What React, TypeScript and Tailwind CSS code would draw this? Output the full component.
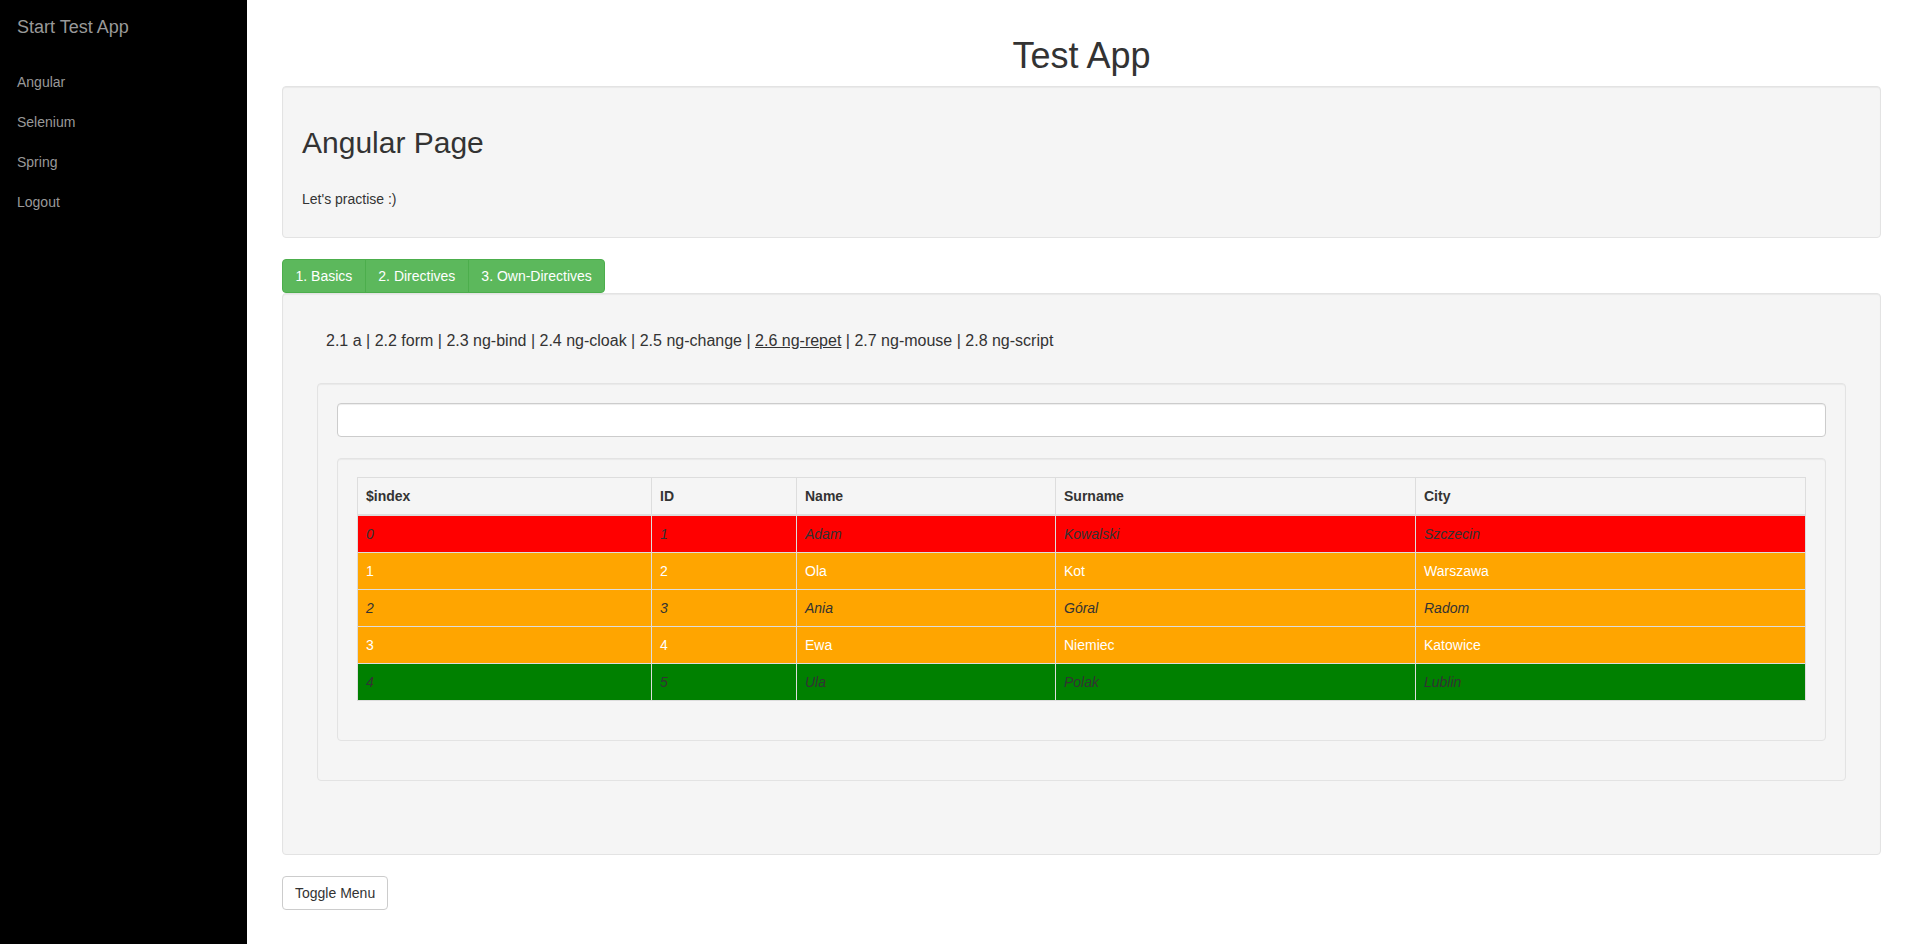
import React from 'react';

const people = [
  { id: 1, name: 'Adam', surname: 'Kowalski', city: 'Szczecin', bg: 'bg-[#ff0000]', text: 'italic text-[#333]' },
  { id: 2, name: 'Ola', surname: 'Kot', city: 'Warszawa', bg: 'bg-[#ffa500]', text: 'text-white' },
  { id: 3, name: 'Ania', surname: 'Góral', city: 'Radom', bg: 'bg-[#ffa500]', text: 'italic text-[#333]' },
  { id: 4, name: 'Ewa', surname: 'Niemiec', city: 'Katowice', bg: 'bg-[#ffa500]', text: 'text-white' },
  { id: 5, name: 'Ula', surname: 'Polak', city: 'Lublin', bg: 'bg-[#008000]', text: 'italic text-[#333]' },
];

const menu = ['Angular', 'Selenium', 'Spring', 'Logout'];

const links = ['2.1 a', '2.2 form', '2.3 ng-bind', '2.4 ng-cloak', '2.5 ng-change', '2.6 ng-repet', '2.7 ng-mouse', '2.8 ng-script'];

const Sidebar: React.FC = () => (
  <aside className="w-[247px] shrink-0 bg-black">
    <div className="h-[62px] px-[17px] text-[18px] leading-[54px] text-[#999]">Start Test App</div>
    <ul>
      {menu.map((item) => (
        <li key={item} className="h-[40px] px-[17px] text-[14px] leading-[40px] text-[#999]">
          {item}
        </li>
      ))}
    </ul>
  </aside>
);

const cell = 'border border-[#ddd] px-[8px] py-[8px] text-left leading-[20px] align-top';

const PeopleTable: React.FC = () => (
  <table className="w-full table-fixed border-collapse text-[14px]">
    <colgroup>
      <col className="w-[294px]" />
      <col className="w-[145px]" />
      <col className="w-[259px]" />
      <col className="w-[360px]" />
      <col />
    </colgroup>
    <thead>
      <tr className="text-[#333]">
        {['$index', 'ID', 'Name', 'Surname', 'City'].map((h) => (
          <th key={h} className={`${cell} border-b-2 font-bold`}>
            {h}
          </th>
        ))}
      </tr>
    </thead>
    <tbody>
      {people.map((p, i) => (
        <tr key={p.id} className={`${p.bg} ${p.text}`}>
          <td className={cell}>{i}</td>
          <td className={cell}>{p.id}</td>
          <td className={cell}>{p.name}</td>
          <td className={cell}>{p.surname}</td>
          <td className={cell}>{p.city}</td>
        </tr>
      ))}
    </tbody>
  </table>
);

const well = 'rounded-[4px] border border-[#e3e3e3] bg-[#f5f5f5] shadow-[inset_0_1px_1px_rgba(0,0,0,0.05)]';
const tab = 'border border-[#4cae4c] bg-[#5cb85c] px-[12.5px] py-[6px]';

export default function App() {
  return (
    <div className="flex min-h-screen bg-white [font-family:'Liberation_Sans',Arial,sans-serif] text-[#333]">
      <Sidebar />

      <main className="flex-1 pl-[35px] pr-[33px] pt-[36px]">
        <h1 className="mb-[10px] text-center text-[36px] leading-[40px] font-medium">Test App</h1>

        {/* Page header */}
        <div className={`${well} mb-[21px] px-[19px] pt-[19px] pb-[19px]`}>
          <h2 className="mt-[20px] mb-[30px] text-[30px] leading-[33px] font-medium">Angular Page</h2>
          <p className="mb-[9px] text-[14px] leading-[20px]">Let's practise :)</p>
        </div>

        {/* Section buttons */}
        <div className="flex text-[14px] leading-[20px] text-white">
          <button className={`${tab} rounded-l-[4px]`}>1. Basics</button>
          <button className={`${tab} -ml-px`}>2. Directives</button>
          <button className={`${tab} -ml-px rounded-r-[4px]`}>3. Own-Directives</button>
        </div>

        <div className={`${well} p-[19px]`}>
          <div className="px-[15px]">
            <p className="mt-[16px] pl-[9px] text-[16px] leading-[23px]">
              {links.map((l, i) => (
                <React.Fragment key={l}>
                  {i > 0 && ' | '}
                  {l === '2.6 ng-repet' ? <span className="underline">{l}</span> : l}
                </React.Fragment>
              ))}
            </p>

            <div className={`${well} mt-[31px] mb-[54px] p-[19px]`}>
              <input
                type="text"
                className="block h-[34px] w-full rounded-[4px] border border-[#ccc] bg-white px-[12px] text-[14px] shadow-[inset_0_1px_1px_rgba(0,0,0,0.075)] outline-none"
              />

              <div className={`${well} mt-[21px] mb-[20px] px-[19px] pt-[18px] pb-[19px]`}>
                <div className="mb-[20px]">
                  <PeopleTable />
                </div>
              </div>
            </div>
          </div>
        </div>

        <button className="mt-[21px] h-[34px] rounded-[4px] border border-[#ccc] bg-white px-[12px] text-[14px] text-[#333]">
          Toggle Menu
        </button>
      </main>
    </div>
  );
}
